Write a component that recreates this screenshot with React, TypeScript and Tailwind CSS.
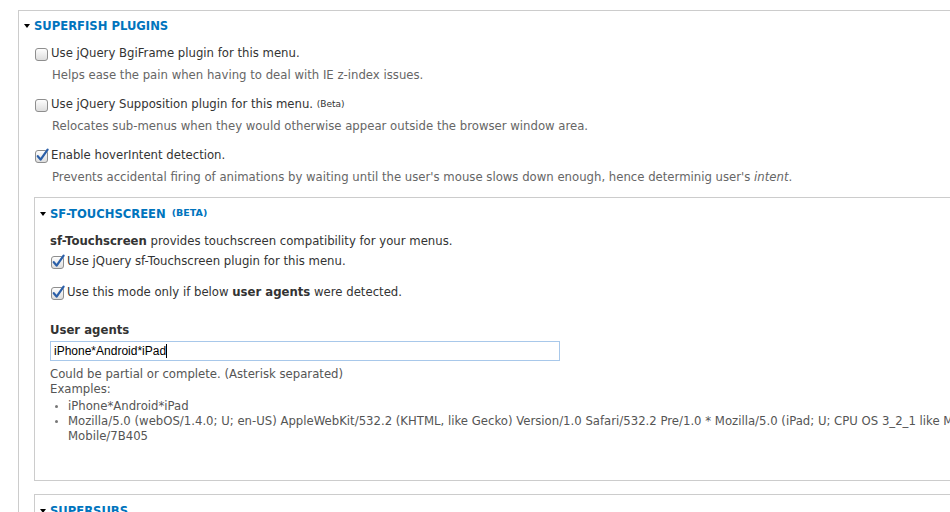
import React from 'react';

const Caret = () => (
  <svg width="6" height="4" viewBox="0 0 6 4" className="shrink-0">
    <path d="M0 0 L6 0 L3 4 Z" fill="#000" />
  </svg>
);

const Checkbox = ({ checked }: { checked?: boolean }) => (
  <svg width="14" height="15" viewBox="0 0 14 15" className="shrink-0">
    <defs>
      <linearGradient id="cbg" x1="0" y1="0" x2="0" y2="1">
        <stop offset="0" stopColor="#ffffff" />
        <stop offset="1" stopColor="#dcdcdc" />
      </linearGradient>
    </defs>
    <rect x="0.5" y="2.5" width="12" height="12" rx="2.5" fill="url(#cbg)" stroke="#8e8e8e" />
    {checked && (
      <path d="M2.8 8.2 L5.6 11.6 L12.6 1.6" fill="none" stroke="#2b5fa8" strokeWidth="2.2" strokeLinecap="round" strokeLinejoin="round" />
    )}
  </svg>
);

interface OptionProps {
  label: React.ReactNode;
  desc: React.ReactNode;
  checked?: boolean;
  first?: boolean;
}

const Option: React.FC<OptionProps> = ({ label, desc, checked, first }) => (
  <div className={first ? 'mt-[11px]' : 'mt-[13px]'}>
    <div className="flex items-center gap-[2px] h-[16px] ml-[1px] text-[11.7px] text-[#333]">
      <Checkbox checked={checked} />
      <span className="leading-[16px] whitespace-nowrap">{label}</span>
    </div>
    <div className="mt-[6px] h-[16px] leading-[16px] pl-[18px] text-[11.7px] text-[#666] whitespace-nowrap">{desc}</div>
  </div>
);

const Legend = ({ children }: { children: React.ReactNode }) => (
  <div className="flex items-center gap-[4px] -ml-[10px] h-[16px] leading-[16px] text-[11.6px] font-bold text-[#0074bd] whitespace-nowrap">
    <Caret />
    <span>{children}</span>
  </div>
);

export default function App() {
  return (
    <div className="w-[950px] h-[512px] overflow-hidden bg-white font-['DejaVu_Sans',sans-serif]">
      <div className="pl-[18px] pt-[10px]">
        <div className="w-[1100px] border-t border-l border-[#cccccc] pl-[15px] pt-[7px] pb-[20px]">
          <Legend>SUPERFISH PLUGINS</Legend>

          <Option first label="Use jQuery BgiFrame plugin for this menu." desc="Helps ease the pain when having to deal with IE z-index issues." />
          <Option
            label={
              <>
                Use jQuery Supposition plugin for this menu.{' '}
                <sup className="text-[9px] relative -top-[1px]">(Beta)</sup>
              </>
            }
            desc="Relocates sub-menus when they would otherwise appear outside the browser window area."
          />
          <Option
            checked
            label="Enable hoverIntent detection."
            desc={
              <>
                Prevents accidental firing of animations by waiting until the user's mouse slows down enough, hence determinig user's <em>intent</em>.
              </>
            }
          />

          <div className="mt-[12px] border border-[#cccccc] pl-[15px] pt-[8px] pb-[36px] text-[#333]">
            <Legend>
              SF-TOUCHSCREEN <sup className="text-[9.5px] relative -top-[2px] ml-[2px]">(BETA)</sup>
            </Legend>
            <div className="mt-[11px] h-[16px] leading-[16px] text-[11.7px] whitespace-nowrap">
              <b>sf-Touchscreen</b> provides touchscreen compatibility for your menus.
            </div>
            <div className="mt-[4px] flex items-center gap-[2px] h-[16px] ml-[1px] text-[11.7px] whitespace-nowrap">
              <Checkbox checked />
              <span className="leading-[16px]">Use jQuery sf-Touchscreen plugin for this menu.</span>
            </div>
            <div className="mt-[15px] flex items-center gap-[2px] h-[16px] ml-[1px] text-[11.7px] whitespace-nowrap">
              <Checkbox checked />
              <span className="leading-[16px]">
                Use this mode only if below <b>user agents</b> were detected.
              </span>
            </div>

            <div className="mt-[22px] h-[16px] leading-[16px] text-[11.7px] font-bold">User agents</div>
            <div className="mt-[3px] w-[510px] h-[20px] border border-[#a8c8ea] flex items-center pl-[3px] font-['Liberation_Sans',sans-serif] text-[12px] text-black">
              <span>iPhone*Android*iPad</span>
              <span className="w-px h-[14px] bg-black" />
            </div>

            <div className="mt-[6px] text-[11.7px] leading-[15px] text-[#555]">
              <div>Could be partial or complete. (Asterisk separated)</div>
              <div>Examples:</div>
              <ul className="mt-[2px] list-disc pl-[18px] marker:text-[#777] marker:text-[10px]">
                <li>iPhone*Android*iPad</li>
                <li>
                  <span className="whitespace-nowrap">
                    Mozilla/5.0 (webOS/1.4.0; U; en-US) AppleWebKit/532.2 (KHTML, like Gecko) Version/1.0 Safari/532.2 Pre/1.0 * Mozilla/5.0 (iPad; U; CPU OS 3_2_1 like Mac OS X; en-us) AppleWebKit/531.21.10 (KHTML, like Gecko)
                  </span>
                  <br />
                  Mobile/7B405
                </li>
              </ul>
            </div>
          </div>

          <div className="mt-[13px] border border-[#cccccc] pl-[15px] pt-[8px] pb-[20px]">
            <Legend>SUPERSUBS</Legend>
          </div>
        </div>
      </div>
    </div>
  );
}
